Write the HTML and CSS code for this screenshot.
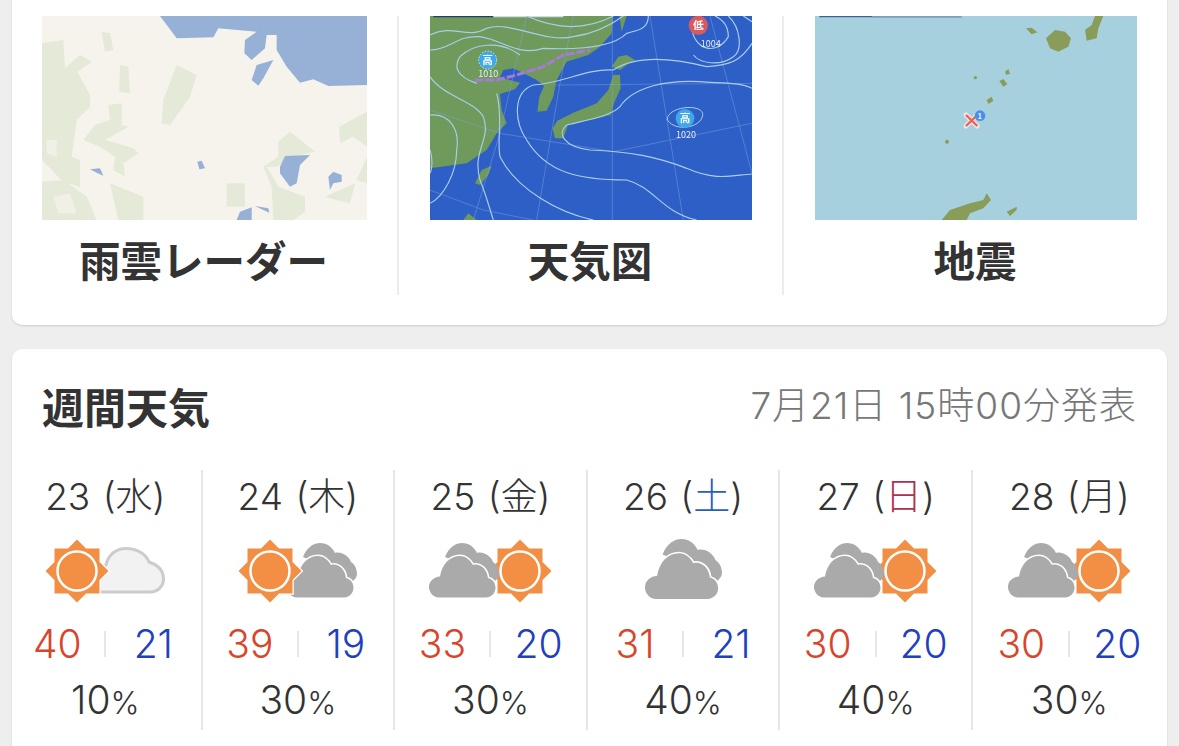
FILE: index.html
```html
<!DOCTYPE html>
<html lang="ja">
<head>
<meta charset="utf-8">
<title>週間天気</title>
<link rel="stylesheet" href="styles.css">
</head>
<body>
<svg class="defs" width="0" height="0" aria-hidden="true">
  <symbol id="sun" viewBox="0 0 64 64" overflow="visible">
    <path class="sun-shape" d="M32 .5L41 9.500H54.500V23L63.500 32L54.500 41V54.500H41L32 63.500L23 54.500H9.500V41L.5 32L9.500 23V9.500H23Z"/>
    <circle cx="32" cy="32" r="19.500" fill="#f28f45" stroke="#fff" stroke-width="2.500"/>
  </symbol>
  <symbol id="cloud-gray" viewBox="0 0 70 55" overflow="visible">
    <path fill="#aaa" d="M16 14C20 4 27 0 33 0C40 0 45 4 48 10C54 8 62 13 64 19C69 22 70 28 70 31C70 34 68 36 66 38L50 37L30 20Z"/>
    <path class="cloud-front" d="M10 54.500C4 54.500 0 49 0 44C0 38 5 34 11 33.500C13 21 21 13 31 13C37 13 41 17 44 22C50 20 58 25 59 35C63 36 66.500 39 66.500 45C66.500 50 62 54.500 57 54.500Z"/>
  </symbol>
  <symbol id="cloud-white" viewBox="0 0 61 46" overflow="visible">
    <path fill="#f2f2f2" stroke="#ccc" stroke-width="3" d="M-10 45H46C54 45 59.500 39 59.500 32C59.500 24 54 18 45 15C42 7 33 1.500 22 1.500C12 1.500 4 8 2 18L-10 30Z"/>
  </symbol>
</svg>

<main class="page">
  <section class="card top">
    <a class="tile">
      <svg class="map" viewBox="126 48 975 612" preserveAspectRatio="none">
        <rect x="126" y="48" width="975" height="612" fill="#f5f3eb"/>
        <g fill="#e4e9d8">
          <path d="M126 130L190 120L195 205L240 165L275 185L232 215L270 285L270 320L230 360L215 470L240 480L240 560L190 545L126 480Z"/>
          <path d="M305 95L330 100L340 150L315 155Z"/>
          <path d="M360 195L385 200L390 280L358 275Z"/>
          <path d="M530 195L590 225L570 290L510 375L485 370L490 300Z"/>
          <path d="M325 315L365 310L365 375L385 380L315 420L400 445L415 460L370 490L375 530L340 510L345 470L300 440L250 420L285 375L330 360Z"/>
          <path d="M126 545L190 540L260 590L290 660H126Z"/>
          <path d="M330 550L430 590L430 660H355Z"/>
          <path d="M680 550H735V620H680Z"/>
          <path d="M870 395L945 455L880 470L830 500L800 500L835 560L915 590L915 635L880 660H820L815 560L790 500L835 470L835 425Z"/>
          <path d="M1018 380L1101 335V440L1060 410L1020 430Z"/>
          <path d="M1070 540L1101 470V550Z"/>
          <path d="M975 590L1065 550L1050 610L1010 600Z"/>
        </g>
        <g fill="#f1f0e6">
          <path d="M160 590L210 580L230 640L175 640Z"/>
          <path d="M140 420L170 420L170 470L140 460Z"/>
        </g>
        <g fill="#97b0d6">
          <path d="M480 48L530 115L640 112L655 85L770 95L735 120L733 160L755 180L795 145L800 105L830 105L830 150L860 200L900 248L940 238L985 258L1101 255V48Z"/>
          <path d="M755 240L770 195L820 180L790 235L775 257Z"/>
          <path d="M592 485L605 482L615 505L598 508Z"/>
          <path d="M270 508L300 505L310 527L290 518Z"/>
          <path d="M840 500L855 468L930 465L900 495L890 550L870 560L840 520Z"/>
          <path d="M985 530L1000 515L1025 525L1025 545L1000 550L990 570Z"/>
          <path d="M710 660L720 635L755 622V660Z"/>
          <path d="M765 618L805 625L808 638L785 628Z"/>
        </g>
      </svg>
      <span class="label">雨雲レーダー</span>
    </a>
    <a class="tile">
      <svg class="map" viewBox="90 48 966 612" preserveAspectRatio="none">
        <rect x="90" y="48" width="966" height="612" fill="#2d5fc6"/>
        <path fill="#6f9a5c" d="M90 48H640L635 100L600 140L565 165L500 185L470 240L460 290L440 332L412 335L418 290L432 258L410 240L375 222L340 205L310 210L300 232L360 248L345 268L300 282L305 330L320 370L290 400L260 450L200 490L90 505Z"/>
        <g fill="#6f9a5c">
          <path d="M640 225L660 225L662 265L642 310L632 345L570 360L505 372L490 415L465 415L458 385L472 362L520 338L590 310L625 270Z"/>
          <path d="M635 200L655 170L680 165L705 180L680 195L660 210Z"/>
          <path d="M658 48H680L665 95Z"/>
          <path d="M225 550L245 510L275 497L265 525L240 555Z"/>
          <path d="M190 660L205 640L230 660Z"/>
        </g>
        <path fill="#1d3f6e" d="M100 48H280V52H100Z"/>
        <path fill="#cfdde8" d="M280 48H490V52H280Z"/>
        <g fill="none" stroke="#7fa3dc" stroke-width="2" opacity=".7">
          <path d="M90 330L300 400L640 455L1056 370"/>
          <path d="M220 660L300 400L380 48"/>
          <path d="M410 660L480 250L520 48"/>
          <path d="M637 660V48"/>
          <path d="M850 660L750 48"/>
          <path d="M1056 520L930 48"/>
          <path d="M90 570L250 630L400 660"/>
          <path d="M470 255L1056 250"/>
        </g>
        <g fill="none" stroke="#a9cdea" stroke-width="3.500">
          <path d="M90 105C160 70 200 120 260 85C330 60 430 130 520 110C590 100 640 70 670 48"/>
          <path d="M90 150C150 150 170 105 240 110C310 120 350 170 430 145C540 150 640 140 680 100C710 90 745 90 745 48"/>
          <path d="M380 48C450 80 540 100 640 48"/>
          <path d="M230 250C170 230 160 200 180 170C220 130 300 120 360 165"/>
          <path d="M90 230C130 290 220 300 250 350C275 420 215 450 240 540C260 590 270 630 280 660"/>
          <path d="M90 345C150 340 180 390 170 450C170 520 130 590 90 610"/>
          <path d="M90 450C100 480 95 510 90 520"/>
          <path d="M290 280C310 350 290 420 300 470C350 570 480 640 580 660"/>
          <path d="M640 210C560 205 490 250 400 255C340 275 340 360 380 420C440 520 540 540 680 540C760 560 790 640 890 660"/>
          <path d="M640 210C700 170 800 170 920 200C990 195 1020 185 1056 130"/>
          <path d="M500 375C560 360 630 350 660 320C700 260 800 240 900 245C950 250 1020 245 1056 265"/>
          <path d="M500 375C470 400 490 440 570 450C690 455 770 470 860 505C950 545 1000 525 1056 522"/>
          <path d="M875 80C880 150 950 170 985 110C985 70 960 55 945 48"/>
          <path d="M985 48C1020 80 1030 150 1000 170C960 200 900 190 880 165"/>
          <path d="M1030 48L1056 65"/>
          <path d="M802 360C800 320 900 310 908 340C912 380 830 400 802 360Z" stroke-width="3"/>
        </g>
        <path fill="none" stroke="#a77ad6" stroke-width="9" stroke-dasharray="26 6" d="M225 240L290 240L350 225L430 200L490 165L570 150"/>
        <circle cx="263" cy="180" r="27" fill="#3fa8e8" stroke="#bfe4f5" stroke-width="3" stroke-dasharray="5 4"/>
        <text class="map-mark" x="263" y="192">高</text>
        <text class="map-num" x="265" y="230">1010</text>
        <circle cx="855" cy="355" r="28" fill="#3fa8e8"/>
        <text class="map-mark" x="855" y="367">高</text>
        <text class="map-num" x="858" y="414">1020</text>
        <circle cx="895" cy="76" r="29" fill="#d85a5e"/>
        <text class="map-mark" x="895" y="88">低</text>
        <text class="map-num" x="932" y="140">1004</text>
      </svg>
      <span class="label">天気図</span>
    </a>
    <a class="tile">
      <svg class="map" viewBox="75 48 966 612" preserveAspectRatio="none">
        <rect x="75" y="48" width="966" height="612" fill="#a6d0de"/>
        <path fill="#3a6396" d="M88 48H248V52H88Z"/>
        <path fill="#7d9db8" d="M248 48H515V53H248Z"/>
        <g fill="#8a9c5a">
          <path d="M708 85L725 83L742 97L725 103Z"/>
          <path d="M768 115L795 90L825 95L843 115L835 140L805 155L780 145Z"/>
          <path d="M915 48H940L925 85L920 115L890 122L885 90L905 75Z"/>
          <circle cx="556" cy="233" r="5"/>
          <path d="M645 215L655 207L660 222L648 224Z"/>
          <path d="M628 243L640 237L652 253L640 260Z"/>
          <path d="M590 300L605 290L610 303L595 312Z"/>
          <circle cx="471" cy="425" r="6"/>
          <path d="M455 660L480 630L540 610L580 600L590 580L603 600L580 625L540 640L530 660Z"/>
          <path d="M650 635L680 620L680 630L660 648Z"/>
        </g>
        <path fill="none" stroke="#f1e3e3" stroke-width="15" stroke-linecap="round" d="M528 345L562 378M562 345L528 378"/>
        <path fill="none" stroke="#e8615a" stroke-width="7" d="M528 345L562 378M562 345L528 378"/>
        <circle cx="570" cy="347" r="16" fill="#4a90e8"/>
        <text class="map-mark quake-i" x="570" y="356">1</text>
      </svg>
      <span class="label">地震</span>
    </a>
  </section>

  <section class="card week">
    <header class="week-head">
      <h2 class="week-title">週間天気</h2>
      <p class="week-time">7月21日 15時00分発表</p>
    </header>
    <div class="days">
      <article class="day">
        <p class="date">23 (水)</p>
        <div class="icons"><svg class="sun first"><use href="#sun"/></svg><svg class="cloud-w back"><use href="#cloud-white"/></svg></div>
        <p class="temps"><span class="hi">40</span><i class="sep"></i><span class="lo">21</span></p>
        <p class="pop">10<small>%</small></p>
      </article>
      <article class="day">
        <p class="date">24 (木)</p>
        <div class="icons"><svg class="sun first"><use href="#sun"/></svg><svg class="cloud-g back"><use href="#cloud-gray"/></svg></div>
        <p class="temps"><span class="hi">39</span><i class="sep"></i><span class="lo">19</span></p>
        <p class="pop">30<small>%</small></p>
      </article>
      <article class="day">
        <p class="date">25 (金)</p>
        <div class="icons"><svg class="cloud-g front"><use href="#cloud-gray"/></svg><svg class="sun last"><use href="#sun"/></svg></div>
        <p class="temps"><span class="hi">33</span><i class="sep"></i><span class="lo">20</span></p>
        <p class="pop">30<small>%</small></p>
      </article>
      <article class="day">
        <p class="date">26 (<span class="sat">土</span>)</p>
        <div class="icons"><svg class="cloud-big"><use href="#cloud-gray"/></svg></div>
        <p class="temps"><span class="hi">31</span><i class="sep"></i><span class="lo">21</span></p>
        <p class="pop">40<small>%</small></p>
      </article>
      <article class="day">
        <p class="date">27 (<span class="sun-day">日</span>)</p>
        <div class="icons"><svg class="cloud-g front"><use href="#cloud-gray"/></svg><svg class="sun last"><use href="#sun"/></svg></div>
        <p class="temps"><span class="hi">30</span><i class="sep"></i><span class="lo">20</span></p>
        <p class="pop">40<small>%</small></p>
      </article>
      <article class="day">
        <p class="date">28 (月)</p>
        <div class="icons"><svg class="cloud-g front"><use href="#cloud-gray"/></svg><svg class="sun last"><use href="#sun"/></svg></div>
        <p class="temps"><span class="hi">30</span><i class="sep"></i><span class="lo">20</span></p>
        <p class="pop">30<small>%</small></p>
      </article>
    </div>
  </section>
</main>
</body>
</html>
```
FILE: styles.css
```css
* { box-sizing: border-box; }
html, body { margin: 0; height: 100%; overflow: hidden; }
body {
  background: #eeeeee;
  color: #333;
  font-family: "Noto Sans CJK JP", "Noto Sans", sans-serif;
}
p, h2 { margin: 0; }
.defs { position: absolute; }
.page { padding: 0 12px; }
.card {
  background: #fff;
  border-radius: 10px;
  box-shadow: 0 1px 2px rgba(0,0,0,.14);
}
.top {
  display: grid;
  grid-template-columns: 387px 385px 383px;
  padding: 16px 0 30px;
  border-radius: 0 0 10px 10px;
}
.tile {
  display: flex;
  flex-direction: column;
  align-items: center;
  padding: 0 30px 6px;
  border-right: 2px solid #ececec;
}
.tile + .tile { padding-left: 31px; }
.tile:last-child { border-right: 0; }
.map { display: block; width: 100%; height: 204px; filter: blur(.7px); }
.label {
  margin: 9px 2px 0 0;
  font-size: 41.500px;
  font-weight: 700;
  line-height: 60px;
}
.map-mark {
  fill: #fff;
  font-size: 32px;
  font-weight: 700;
  text-anchor: middle;
}
.map-num {
  fill: #e8eef5;
  font-size: 27px;
  text-anchor: middle;
}
.quake-i { font-size: 22px; }
.week { margin-top: 24px; padding-top: 32px; height: 420px; }
.week-head {
  display: flex;
  justify-content: space-between;
  align-items: center;
  padding: 0 30px;
  margin-bottom: 39px;
  height: 50px;
}
.week-title { font-size: 42px; font-weight: 700; line-height: 50px; }
.week-time {
  font-family: Inter, "Noto Sans CJK JP", sans-serif;
  font-size: 37px;
  font-weight: 300;
  letter-spacing: 1px;
  color: #777;
  line-height: 50px;
}
.days {
  display: grid;
  grid-template-columns: repeat(6, 192.6px);
  margin-left: -2px;
}
.day {
  height: 260px;
  border-right: 2px solid #e6e6e6;
  text-align: center;
  font-family: Inter, "Noto Sans CJK JP", sans-serif;
  font-weight: 300;
}
.day:last-child { border-right: 0; }
.date { font-size: 37px; line-height: 54px; word-spacing: 2px; }
.sat { color: #2a5fb8; }
.sun-day { color: #b03050; }
.icons {
  display: flex;
  justify-content: center;
  align-items: flex-start;
  margin-top: 15px;
  height: 64px;
}
.icons svg { display: block; overflow: visible; flex: none; }
.sun { width: 64px; height: 64px; position: relative; }
.sun-shape { fill: #f28f45; stroke: #fff; stroke-width: 2.5; paint-order: stroke; }
.cloud-front { fill: #aaa; stroke: #fff; stroke-width: 3; paint-order: stroke; }
.cloud-g { width: 70px; height: 55px; margin-top: 4px; position: relative; }
.cloud-w { width: 61px; height: 46px; margin-top: 8px; }
.cloud-big { width: 77px; height: 60.500px; }
.sun.first { z-index: 1; }
.cloud-g.back { margin-left: -15px; }
.cloud-w.back { margin-left: -5px; }
.sun.last { margin-left: -11px; }
.cloud-g.front { z-index: 1; }
.temps {
  display: flex;
  align-items: center;
  justify-content: center;
  margin-top: 16px;
  height: 50px;
  font-size: 39px;
  line-height: 50px;
}
.temps span { width: 94px; }
.hi { color: #d9442b; }
.lo { color: #2040c0; }
.sep { width: 2px; height: 26px; background: #e6e6e6; flex: none; }
.pop { margin-top: 6px; font-size: 39px; line-height: 50px; }
.pop small { font-size: 31px; }
```
